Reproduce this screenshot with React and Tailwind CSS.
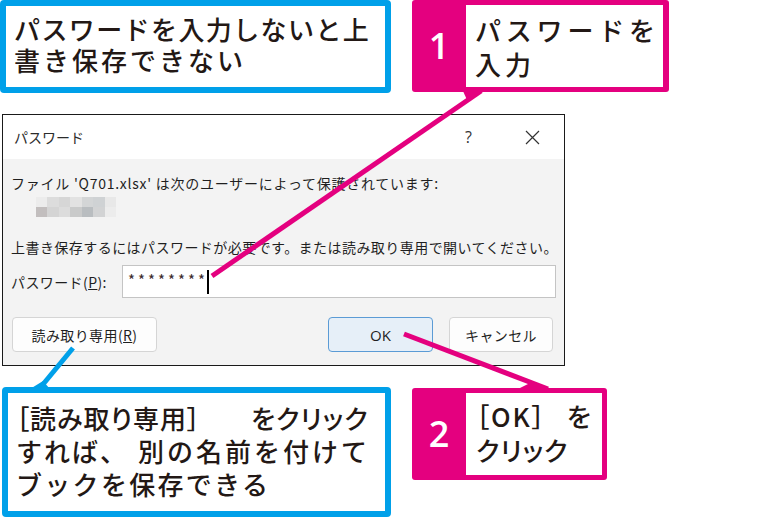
export default function App() {
  const mosaic = [
    ['#ececec', '#dcdcdc', '#d6d6d6', '#e2e2e2', '#d3d5d6', '#cfd2d4', '#e8e8e8'],
    ['#c2bebe', '#d4d4d4', '#dcdcdc', '#c9caca', '#b9bdc0', '#d2d3d4', '#ececec'],
  ];
  return (
    <div className="relative w-[783px] h-[517px] bg-white overflow-hidden font-['Noto_Sans_CJK_JP',sans-serif] text-[#231815]">
      {/* top row */}
      <div className="flex h-[93px]">
        <div className="w-[391px] h-[93px] border-[6px] border-[#00a0e9] rounded-[4px] pl-[8px] pt-[7px] text-[26px] leading-[31px] font-medium whitespace-nowrap">
          <div className="tracking-[1.4px]">パスワードを入力しないと上</div>
          <div className="tracking-[3px]">書き保存できない</div>
        </div>
        <div className="ml-[21px] w-[257px] h-[92px] bg-[#e4007f] rounded-[3px] flex">
          <div className="w-[54px] flex items-center justify-center text-white text-[36px] font-['Open_Sans',sans-serif] font-semibold">1</div>
          <div className="flex-1 bg-white my-[5px] mr-[6px] pl-[9px] pt-[8px] text-[26px] leading-[34px] font-medium whitespace-nowrap">
            <div className="tracking-[4.8px]">パスワードを</div>
            <div className="tracking-[4px]">入力</div>
          </div>
        </div>
      </div>

      {/* dialog */}
      <div className="mt-[21px] ml-[2px] w-[563px] h-[252px] border border-[#1a1a1a] bg-[#f3f3f3] flex flex-col text-[#1f1f1f]">
        <div className="h-[44px] bg-white flex items-center pl-[11px]">
          <span className="text-[14px] text-[#2b2b2b]">パスワード</span>
          <span className="ml-auto text-[16px] text-[#333] font-['Open_Sans',sans-serif]">?</span>
          <svg className="ml-[53px] mr-[24px]" width="15" height="15" viewBox="0 0 15 15">
            <path d="M1 1 L14 14 M14 1 L1 14" stroke="#333" strokeWidth="1.2" fill="none" />
          </svg>
        </div>
        <div className="flex-1 flex flex-col pl-[8px] pr-[8px] text-[14px] leading-[20px]">
          <div className="mt-[14px] whitespace-nowrap tracking-[0.75px]">ファイル 'Q701.xlsx' は次のユーザーによって保護されています:</div>
          <div className="mt-[4px] ml-[25px] flex flex-col w-[80px] h-[20px]">
            {mosaic.map((row, i) => (
              <div key={i} className="flex flex-1">
                {row.map((c, j) => (
                  <div key={j} className="flex-1" style={{ backgroundColor: c }} />
                ))}
              </div>
            ))}
          </div>
          <div className="mt-[20px] whitespace-nowrap tracking-[0.45px]">上書き保存するにはパスワードが必要です。または読み取り専用で開いてください。</div>
          <div className="mt-[8px] flex items-center">
            <span className="whitespace-nowrap tracking-[0.4px]">パスワード(<span className="underline">P</span>):</span>
            <div className="ml-auto w-[434px] h-[33px] bg-white border border-[#c4c4c4] flex items-center pl-[5px]">
              <span className="text-[15px] tracking-[3px] text-[#3a2a2a] -mt-[4px]">********</span>
              <span className="w-[1.5px] h-[24px] bg-black -ml-[1px]" />
            </div>
          </div>
          <div className="mt-[19px] flex items-center">
            <div className="ml-[1px] w-[145px] h-[35px] rounded-[4px] border border-[#d5d5d5] bg-[#fdfdfd] flex items-center justify-center whitespace-nowrap tracking-[0.4px]">
              読み取り専用(<span className="underline">R</span>)
            </div>
            <div className="ml-auto w-[105px] h-[35px] rounded-[4px] border border-[#5b9bd5] bg-[#e6eff8] flex items-center justify-center font-['Open_Sans',sans-serif] text-[15px]">
              OK
            </div>
            <div className="ml-[16px] mr-[3px] w-[104px] h-[35px] rounded-[4px] border border-[#d5d5d5] bg-[#fdfdfd] flex items-center justify-center tracking-[0.4px]">
              キャンセル
            </div>
          </div>
        </div>
      </div>

      {/* bottom row */}
      <div className="mt-[21px] flex">
        <div className="ml-[2px] w-[389px] h-[130px] border-[6px] border-[#00a0e9] rounded-[4px] pl-[8px] pt-[8px] text-[26px] leading-[33px] font-medium whitespace-nowrap">
          <div className="flex">
            <span className="[font-feature-settings:'palt'] tracking-[1px]">［読み取り専用］</span>
            <span className="ml-[50px] [font-feature-settings:'palt'] tracking-[1px]">をクリック</span>
          </div>
          <div className="flex">
            <span className="tracking-[2px]">すれば、</span>
            <span className="ml-[10px] tracking-[3px]">別の名前を付けて</span>
          </div>
          <div className="tracking-[2.3px]">ブックを保存できる</div>
        </div>
        <div className="ml-[21px] mt-[1px] w-[195px] h-[92px] bg-[#e4007f] rounded-[3px] flex">
          <div className="w-[54px] flex items-center justify-center text-white text-[36px] font-['Open_Sans',sans-serif] font-semibold">2</div>
          <div className="flex-1 bg-white my-[5px] mr-[5px] pl-[10px] pt-[6px] text-[26px] leading-[34px] font-medium whitespace-nowrap">
            <div className="flex [font-feature-settings:'palt']">
              <span className="tracking-[2px]">［OK］</span>
              <span className="ml-[20px]">を</span>
            </div>
            <div className="[font-feature-settings:'palt'] tracking-[1px]">クリック</div>
          </div>
        </div>
      </div>

      {/* connector lines */}
      <svg className="absolute inset-0 pointer-events-none" width="783" height="517" viewBox="0 0 783 517">
        <line x1="481" y1="91" x2="212" y2="276" stroke="#e4007f" strokeWidth="5" />
        <polygon points="463,91 485,91 467,100" fill="#e4007f" />
        <line x1="404" y1="334" x2="548" y2="389" stroke="#e4007f" strokeWidth="5" />
        <polygon points="516,390 553,390 532,382" fill="#e4007f" />
        <line x1="73" y1="348" x2="40" y2="388" stroke="#00a0e9" strokeWidth="5" />
        <polygon points="30,389 50,389 43,381" fill="#00a0e9" />
      </svg>
    </div>
  );
}
